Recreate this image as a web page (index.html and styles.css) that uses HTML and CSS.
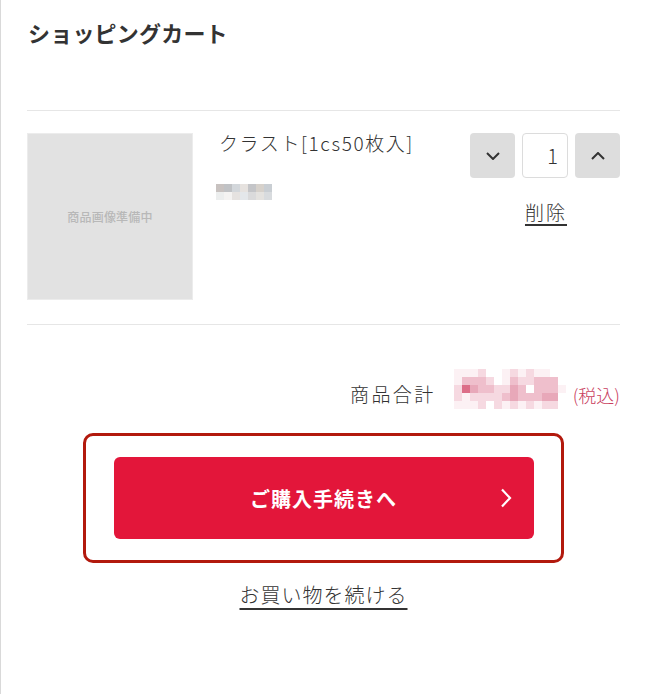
FILE: index.html
```html
<!DOCTYPE html>
<html lang="ja">
<head>
<meta charset="utf-8">
<title>ショッピングカート</title>
<link rel="stylesheet" href="styles.css">
</head>
<body>
<div class="page">
  <h1 class="title">ショッピングカート</h1>

  <div class="cart-item">
    <div class="thumb"><span>商品画像準備中</span></div>
    <div class="info">
      <div class="name">クラスト[1cs50枚入]</div>
      <div class="mosaic mosaic-gray">
        <i class="g1"></i><i class="g2"></i><i class="g3"></i><i class="g4"></i><i class="g5"></i><i class="g6"></i><i class="g7"></i>
        <i class="h1"></i><i class="h2"></i><i class="h3"></i><i class="h4"></i><i class="h5"></i><i class="h6"></i><i class="h7"></i>
      </div>
    </div>
    <div class="qty">
      <div class="qty-row">
        <button class="qty-btn" aria-label="減らす">
          <svg width="14" height="8" viewBox="0 0 14 8"><path d="M1 1 L7 7 L13 1" fill="none" stroke="#333" stroke-width="2"/></svg>
        </button>
        <div class="qty-input">1</div>
        <button class="qty-btn" aria-label="増やす">
          <svg width="14" height="8" viewBox="0 0 14 8"><path d="M1 7 L7 1 L13 7" fill="none" stroke="#333" stroke-width="2"/></svg>
        </button>
      </div>
      <a class="delete" href="#">削除</a>
    </div>
  </div>

  <div class="total">
    <span class="total-label">商品合計</span>
    <div class="mosaic mosaic-pink">
      <i class="p0"></i><i class="p0"></i><i class="p0"></i><i class="p1"></i><i class="w"></i><i class="w"></i><i class="p0"></i><i class="p1"></i><i class="p0"></i><i class="p1"></i><i class="p0"></i><i class="p0"></i><i class="w"></i><i class="w"></i>
      <i class="p0"></i><i class="p2"></i><i class="p2"></i><i class="p2"></i><i class="p1"></i><i class="w"></i><i class="p0"></i><i class="p2"></i><i class="p1"></i><i class="p1"></i><i class="p2"></i><i class="p2"></i><i class="p2"></i><i class="w"></i>
      <i class="p1"></i><i class="p4"></i><i class="p3"></i><i class="p2"></i><i class="p2"></i><i class="p1"></i><i class="p1"></i><i class="p3"></i><i class="p2"></i><i class="w"></i><i class="p2"></i><i class="p2"></i><i class="p2"></i><i class="p0"></i>
      <i class="p1"></i><i class="p0"></i><i class="p1"></i><i class="p1"></i><i class="p1"></i><i class="p1"></i><i class="p2"></i><i class="p3"></i><i class="p2"></i><i class="p2"></i><i class="p2"></i><i class="p3"></i><i class="p3"></i><i class="w"></i>
      <i class="p0"></i><i class="p0"></i><i class="p0"></i><i class="p1"></i><i class="w"></i><i class="p1"></i><i class="p0"></i><i class="p1"></i><i class="p0"></i><i class="p1"></i><i class="p0"></i><i class="p1"></i><i class="p1"></i><i class="w"></i>
    </div>
    <span class="tax">(税込)</span>
  </div>

  <div class="checkout-wrap">
    <a class="checkout" href="#">
      <span>ご購入手続きへ</span>
      <svg class="chev" width="12" height="20" viewBox="0 0 12 20"><path d="M2 1.5 L10 10 L2 18.5" fill="none" stroke="#fff" stroke-width="2.2"/></svg>
    </a>
  </div>

  <div class="continue-row">
    <a class="continue" href="#">お買い物を続ける</a>
  </div>
</div>
</body>
</html>
```

FILE: styles.css
```css
* { box-sizing: border-box; }

html, body {
  margin: 0;
  padding: 0;
  background: #fff;
}

body {
  font-family: "Noto Sans CJK JP", "Noto Sans", sans-serif;
  color: #333;
}

.page {
  border-left: 1px solid #d9d9d9;
  min-height: 694px;
  padding: 19px 25px 0 26px;
}

.title {
  margin: 0 0 65px 1px;
  font-size: 22px;
  line-height: 26px;
  font-weight: 700;
  letter-spacing: 0.2px;
  color: #333;
}

.cart-item {
  display: flex;
  align-items: flex-start;
  border-top: 1px solid #e6e6e6;
  border-bottom: 1px solid #e6e6e6;
  padding: 22px 0 24px;
}

.thumb {
  width: 166px;
  height: 167px;
  background: #e2e2e2;
  border: 1px solid #ececec;
  display: flex;
  align-items: center;
  justify-content: center;
  flex-shrink: 0;
}

.thumb span {
  font-size: 12px;
  color: #b8b8b8;
  font-weight: 500;
  letter-spacing: 0.2px;
}

.info {
  flex: 1;
  margin-left: 26px;
}

.name {
  font-size: 19px;
  line-height: 20px;
  font-weight: 300;
  letter-spacing: 1.6px;
  color: #333;
}

.mosaic {
  display: grid;
  grid-auto-rows: 8px;
}

.mosaic i { display: block; }

.mosaic-gray {
  margin-top: 31px;
  margin-left: -3px;
  grid-template-columns: repeat(7, 8px);
  width: 56px;
}

.g1 { background: #c8c2c0; }
.g2 { background: #c0c2c5; }
.g3 { background: #d3d7db; }
.g4 { background: #e6e2df; }
.g5 { background: #c4c5c8; }
.g6 { background: #d6d1cb; }
.g7 { background: #c9ced3; }
.h1 { background: #eceeee; }
.h2 { background: #f4f3f2; }
.h3 { background: #e5e2e0; }
.h4 { background: #e4e7ea; }
.h5 { background: #dadadb; }
.h6 { background: #e4e2df; }
.h7 { background: #d8dbde; }

.qty {
  width: 150px;
  display: flex;
  flex-direction: column;
  align-items: center;
}

.qty-row {
  display: flex;
  gap: 7px;
}

.qty-btn {
  width: 45px;
  height: 45px;
  border: none;
  border-radius: 4px;
  background: #dddddd;
  display: flex;
  align-items: center;
  justify-content: center;
  padding: 0;
}

.qty-input {
  width: 46px;
  height: 45px;
  border: 1px solid #dcdcdc;
  border-radius: 4px;
  background: #fff;
  font-size: 20px;
  line-height: 43px;
  font-weight: 300;
  text-align: right;
  padding-right: 9px;
  color: #333;
}

.delete {
  margin-top: 22px;
  font-size: 19px;
  line-height: 24px;
  font-weight: 300;
  letter-spacing: 2px;
  color: #333;
  text-decoration: underline;
  text-underline-offset: 4px;
  text-decoration-thickness: 2px;
  margin-right: -2px;
}

.total {
  display: flex;
  justify-content: flex-end;
  align-items: center;
  margin-top: 43px;
  height: 41px;
}

.total-label {
  font-size: 19px;
  line-height: 24px;
  font-weight: 300;
  letter-spacing: 2.4px;
  color: #333;
  padding-top: 10px;
  margin-right: 18px;
}

.mosaic-pink {
  grid-template-columns: repeat(14, 8px);
  width: 112px;
}

.p0 { background: #fcf1f4; }
.p1 { background: #f6d9e1; }
.p2 { background: #efbfcc; }
.p3 { background: #e8a8b9; }
.p4 { background: #dc6e88; }
.w  { background: #ffffff; }

.tax {
  font-size: 18px;
  line-height: 22px;
  font-weight: 300;
  color: #c9415f;
  padding-top: 12px;
  margin-left: 7px;
}

.checkout-wrap {
  width: 481px;
  margin: 24px auto 0;
  border: 3px solid #b2190d;
  border-radius: 10px;
  padding: 21px 0;
}

.checkout {
  position: relative;
  width: 420px;
  height: 82px;
  margin: 0 auto;
  background: #e3163a;
  border-radius: 6px;
  display: flex;
  align-items: center;
  justify-content: center;
  color: #fff;
  text-decoration: none;
  font-size: 20px;
  font-weight: 700;
  letter-spacing: 1px;
}

.checkout .chev {
  position: absolute;
  right: 22px;
  top: 31px;
}

.continue-row {
  display: flex;
  justify-content: center;
  margin-top: 19px;
}

.continue {
  font-size: 20px;
  line-height: 26px;
  font-weight: 300;
  letter-spacing: 1px;
  color: #333;
  text-decoration: underline;
  text-underline-offset: 5px;
  text-decoration-thickness: 2px;
}
```
